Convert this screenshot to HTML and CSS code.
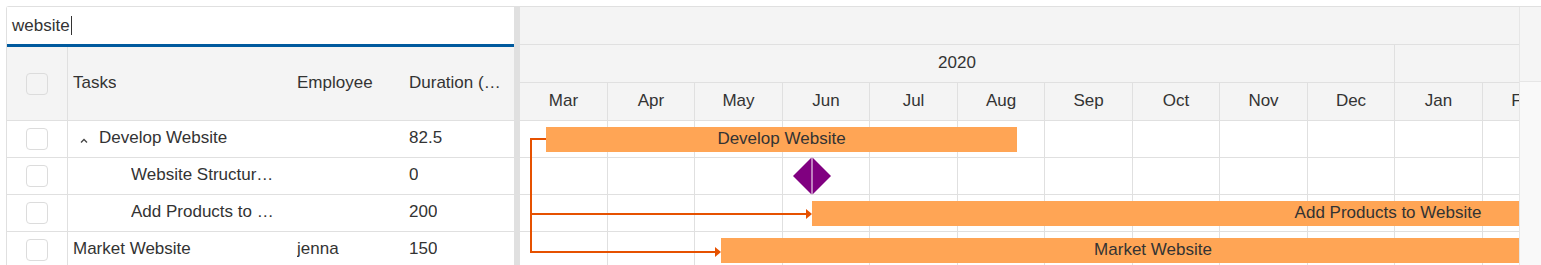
FILE: index.html
```html
<!DOCTYPE html>
<html>
	<head>
		<meta charset="UTF-8">
		<title>Project Gantt</title>
		<link rel="stylesheet" href="styles.css">
	</head>
	<body>
		<div class="gantt">
			<!-- left: task grid -->
			<div class="grid-pane">
				<div class="search"><span>website</span><span class="caret"></span></div>
				<div class="grid-head row">
					<div class="cell check-col"><span class="checkbox"></span></div>
					<div class="cell task-col"><span class="txt">Tasks</span></div>
					<div class="cell emp-col"><span class="txt">Employee</span></div>
					<div class="cell dur-col"><span class="txt">Duration (Days)</span></div>
				</div>
				<div class="grid-row row">
					<div class="cell check-col"><span class="checkbox"></span></div>
					<div class="cell task-col parent">
						<svg class="chevron" width="8" height="5" viewBox="0 0 8 5"><polyline points="1,4.5 4,1.5 7,4.5" fill="none" stroke="#444" stroke-width="1.3"/></svg>
						<span class="txt">Develop Website</span>
					</div>
					<div class="cell emp-col"></div>
					<div class="cell dur-col"><span class="txt">82.5</span></div>
				</div>
				<div class="grid-row row">
					<div class="cell check-col"><span class="checkbox"></span></div>
					<div class="cell task-col child"><span class="txt">Website Structure Design</span></div>
					<div class="cell emp-col"></div>
					<div class="cell dur-col"><span class="txt">0</span></div>
				</div>
				<div class="grid-row row">
					<div class="cell check-col"><span class="checkbox"></span></div>
					<div class="cell task-col child"><span class="txt">Add Products to Website</span></div>
					<div class="cell emp-col"></div>
					<div class="cell dur-col"><span class="txt">200</span></div>
				</div>
				<div class="grid-row row">
					<div class="cell check-col"><span class="checkbox"></span></div>
					<div class="cell task-col"><span class="txt">Market Website</span></div>
					<div class="cell emp-col"><span class="txt">jenna</span></div>
					<div class="cell dur-col"><span class="txt">150</span></div>
				</div>
			</div>

			<div class="splitter"></div>

			<!-- right: timeline chart -->
			<div class="chart-pane">
				<div class="tier"></div>
				<div class="tier years">
					<div class="tl-cell">2020</div>
					<div class="tl-cell">2021</div>
				</div>
				<div class="tier months">
					<div class="tl-cell">Mar</div>
					<div class="tl-cell">Apr</div>
					<div class="tl-cell">May</div>
					<div class="tl-cell">Jun</div>
					<div class="tl-cell">Jul</div>
					<div class="tl-cell">Aug</div>
					<div class="tl-cell">Sep</div>
					<div class="tl-cell">Oct</div>
					<div class="tl-cell">Nov</div>
					<div class="tl-cell">Dec</div>
					<div class="tl-cell">Jan</div>
					<div class="tl-cell">Feb</div>
				</div>
				<div class="chart-body">
					<div class="cols">
						<div></div><div></div><div></div><div></div><div></div><div></div>
						<div></div><div></div><div></div><div></div><div></div><div></div>
					</div>
					<div class="bars">
						<div class="chart-row">
							<div class="bar" style="margin-left:26px;width:471px">Develop Website</div>
						</div>
						<div class="chart-row">
							<svg class="milestone" style="margin-left:273px" width="38" height="38" viewBox="0 0 38 38">
								<polygon points="0,19 18.5,0.5 18.5,37.5" fill="#800080"/>
								<polygon points="19.5,0.5 38,19 19.5,37.5" fill="#800080"/>
							</svg>
						</div>
						<div class="chart-row">
							<div class="bar" style="margin-left:292px;width:1152px">Add Products to Website</div>
						</div>
						<div class="chart-row">
							<div class="bar" style="margin-left:201px;width:864px">Market Website</div>
						</div>
					</div>
					<svg class="links" width="999" height="148" viewBox="0 0 999 148">
						<path d="M26 18 H11 V131 H196" fill="none" stroke="#e65100" stroke-width="2"/>
						<path d="M11 93 H287" fill="none" stroke="#e65100" stroke-width="2"/>
						<polygon points="286,88 292,93 286,98" fill="#e65100"/>
						<polygon points="195,126 201,131 195,136" fill="#e65100"/>
					</svg>
				</div>
			</div>

			<div class="scrollbar">
				<div class="scroll-head"></div>
				<div class="scroll-track"></div>
			</div>
		</div>
	</body>
</html>
```

FILE: styles.css
```css
*{
	margin: 0;
	padding: 0;
	box-sizing: border-box;
}
body{
	font-family: "Liberation Sans", Arial, sans-serif;
	font-size: 17px;
	color: #333;
	background: #fff;
	overflow: hidden;
}
.gantt{
	display: flex;
	margin: 6px 0 0 6px;
	height: 300px;
	border-top: 1px solid #e0e0e0;
	border-left: 1px solid #e0e0e0;
	border-top-left-radius: 3px;
}

/* grid */
.grid-pane{
	width: 507px;
	flex-shrink: 0;
}
.search{
	height: 40px;
	line-height: 37px;
	padding-left: 5px;
	border-bottom: 3px solid #005a9e;
	background: #fff;
	white-space: nowrap;
}
.caret{
	display: inline-block;
	width: 1px;
	height: 19px;
	margin-left: 1px;
	background: #333;
	vertical-align: -4px;
}
.row{
	display: flex;
	border-bottom: 1px solid #e0e0e0;
}
.grid-head{
	height: 74px;
	background: #f4f4f4;
}
.grid-row{
	height: 37px;
}
.cell{
	display: flex;
	align-items: center;
	padding: 0 5px 2px;
	white-space: nowrap;
	overflow: hidden;
}
.cell .txt{
	overflow: hidden;
	text-overflow: ellipsis;
}
.check-col{
	width: 61px;
	padding: 0;
	justify-content: center;
	border-right: 1px solid #e0e0e0;
}
.checkbox{
	display: block;
	width: 22px;
	height: 22px;
	border: 1px solid #dcdcdc;
	border-radius: 4px;
}
.task-col{
	width: 224px;
	padding-right: 10px;
}
.emp-col{
	width: 112px;
}
.dur-col{
	width: 110px;
}
.chevron{
	flex-shrink: 0;
	margin: 5px 0 0 7px;
}
.parent .txt{
	margin-left: 11px;
}
.child{
	padding-left: 63px;
}

.splitter{
	width: 6px;
	flex-shrink: 0;
	background: #e0e0e0;
}

/* chart */
.chart-pane{
	width: 999px;
	flex-shrink: 0;
	display: flex;
	flex-direction: column;
	overflow: hidden;
}
.tier{
	height: 38px;
	flex-shrink: 0;
	background: #f4f4f4;
	border-bottom: 1px solid #e0e0e0;
}
.years, .months{
	display: grid;
}
.years{
	grid-template-columns: 875px 1050px;
}
.months, .cols{
	grid-template-columns: 88px 87px 88px 87px 88px 87px 88px 87px 88px 87px 88px 87px;
}
.tl-cell{
	border-right: 1px solid #e0e0e0;
	text-align: center;
	line-height: 36px;
	white-space: nowrap;
	overflow: hidden;
}
.chart-body{
	flex: 1;
	display: grid;
}
.chart-body > *{
	grid-area: 1 / 1;
}
.cols{
	display: grid;
}
.cols div{
	border-right: 1px solid #e0e0e0;
}
.chart-row{
	height: 37px;
	display: flex;
	align-items: center;
	border-bottom: 1px solid #e0e0e0;
}
.bar{
	flex-shrink: 0;
	height: 25px;
	line-height: 23px;
	background: #ffa555;
	text-align: center;
	white-space: nowrap;
}
.milestone{
	flex-shrink: 0;
}
.links{
	align-self: start;
	justify-self: start;
	pointer-events: none;
}

/* scroll area */
.scrollbar{
	width: 22px;
	flex-shrink: 0;
	border-left: 1px solid #e6e6e6;
	display: flex;
	flex-direction: column;
}
.scroll-head{
	height: 75px;
	background: #f5f5f5;
	border-bottom: 1px solid #e6e6e6;
}
.scroll-track{
	flex: 1;
	background: #f9f9f9;
}
```
